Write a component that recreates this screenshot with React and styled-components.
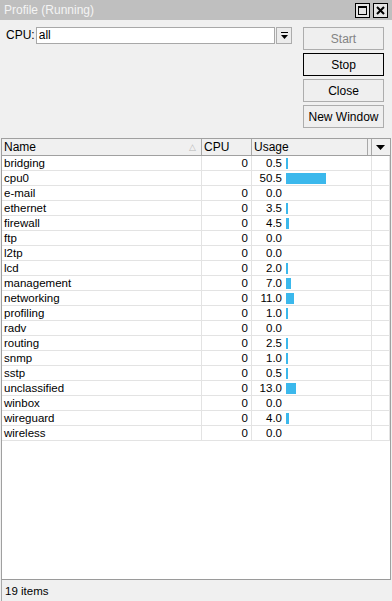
import React from "react";
import styled, { createGlobalStyle } from "styled-components";

const GlobalStyle = createGlobalStyle`
  html, body {
    margin: 0;
    padding: 0;
    background: #f0f0f0;
  }
  body {
    font-family: "Liberation Sans", Arial, sans-serif;
    font-size: 11px;
    color: #000;
  }
`;

const Window = styled.div`
  width: 392px;
  height: 601px;
  display: flex;
  flex-direction: column;
  background: #f0f0f0;
  overflow: hidden;
`;

const TitleBar = styled.div`
  height: 20px;
  flex: none;
  background: #bfbfbf;
  display: flex;
  align-items: center;
  justify-content: space-between;
  padding: 0 4px 0 4px;
  color: #f4f4f4;
  font-size: 12px;
`;

const TitleButtons = styled.div`
  display: flex;
  gap: 3px;
  padding-top: 1px;
`;

const TitleButton = styled.div`
  width: 13px;
  height: 13px;
  border: 1px solid #000;
  background: #e4e4e4;
  display: flex;
  align-items: center;
  justify-content: center;
`;

const TopPanel = styled.div`
  height: 118px;
  flex: none;
  display: flex;
  padding: 7px 0 0 6px;
  box-sizing: border-box;
`;

const FilterRow = styled.div`
  display: flex;
  align-items: flex-start;
  width: 286px;
`;

const Label = styled.span`
  width: 30px;
  line-height: 17px;
  font-size: 12px;
`;

const Input = styled.div`
  width: 237px;
  height: 15px;
  border: 1px solid #a8a8a8;
  background: #fff;
  padding-left: 2px;
  line-height: 15px;
  font-size: 12px;
`;

const DropButton = styled.div`
  width: 14px;
  height: 15px;
  margin-left: 1px;
  border: 1px solid #acacac;
  background: #ececec;
  display: flex;
  align-items: center;
  justify-content: center;
`;

const ButtonColumn = styled.div`
  display: flex;
  flex-direction: column;
  gap: 3px;
  margin-left: 11px;
`;

const Button = styled.div`
  width: 79px;
  height: 21px;
  border: 1px solid ${(p) => (p.$default ? "#000" : "#adadad")};
  background: #efefef;
  color: ${(p) => (p.$disabled ? "#838383" : "#000")};
  display: flex;
  align-items: center;
  justify-content: center;
  font-size: 12px;
`;

const Table = styled.div`
  flex: 1;
  margin: 0 1px;
  border: 1px solid #a0a0a0;
  border-bottom-color: #9a9a9a;
  background: #fff;
  display: flex;
  flex-direction: column;
  min-height: 0;
`;

const cols = "200px 50px 120px 1fr";

const HeaderRow = styled.div`
  display: grid;
  grid-template-columns: ${cols};
  height: 16px;
  background: #f0f0f0;
  border-bottom: 1px solid #a0a0a0;
`;

const HeaderCell = styled.div`
  position: relative;
  padding-left: ${(p) => (p.$pad !== undefined ? p.$pad : 2)}px;
  line-height: 16px;
  font-size: 12px;
  border-right: 1px solid ${(p) => (p.$last ? "transparent" : "#a8a8a8")};
  display: flex;
  align-items: center;
  justify-content: ${(p) => (p.$center ? "center" : "flex-start")};
  box-shadow: ${(p) => (p.$double ? "inset -3px 0 0 #f0f0f0, inset -4px 0 0 #a8a8a8" : "none")};
`;

const SortMark = styled.span`
  position: absolute;
  right: 5px;
  top: 0;
  color: #b8b8b8;
  font-size: 9px;
`;

const Row = styled.div`
  display: grid;
  grid-template-columns: ${cols};
  height: 15px;
  box-sizing: border-box;
  border-bottom: 1px solid #e3e3e3;
`;

const Cell = styled.div`
  border-right: 1px solid #e3e3e3;
  line-height: 14px;
  font-size: 11.5px;
  padding: 0 ${(p) => (p.$right ? 3 : 0)}px 0 ${(p) => (p.$right ? 0 : 2)}px;
  text-align: ${(p) => (p.$right ? "right" : "left")};
  white-space: nowrap;
  overflow: hidden;
`;

const UsageCell = styled.div`
  display: flex;
  align-items: center;
  border-right: 1px solid #e3e3e3;
`;

const UsageValue = styled.span`
  width: 30px;
  text-align: right;
  line-height: 14px;
  font-size: 11.5px;
`;

const Bar = styled.div`
  height: 11px;
  margin-left: 4px;
  background: #3bb8ec;
`;

const StatusBar = styled.div`
  height: 21px;
  flex: none;
  display: flex;
  align-items: center;
  padding-left: 3px;
  margin-left: 1px;
  border-left: 1px solid #a8a8a8;
  font-size: 11.5px;
`;

const rows = [
  ["bridging", "0", 0.5],
  ["cpu0", "", 50.5],
  ["e-mail", "0", 0],
  ["ethernet", "0", 3.5],
  ["firewall", "0", 4.5],
  ["ftp", "0", 0],
  ["l2tp", "0", 0],
  ["lcd", "0", 2],
  ["management", "0", 7],
  ["networking", "0", 11],
  ["profiling", "0", 1],
  ["radv", "0", 0],
  ["routing", "0", 2.5],
  ["snmp", "0", 1],
  ["sstp", "0", 0.5],
  ["unclassified", "0", 13],
  ["winbox", "0", 0],
  ["wireguard", "0", 4],
  ["wireless", "0", 0],
];

const barWidth = (v) => (v > 0 ? Math.max(2, Math.floor(v * 0.8)) : 0);

const App = () => {
  return (
    <Window>
      <GlobalStyle />
      <TitleBar>
        <span>Profile (Running)</span>
        <TitleButtons>
          <TitleButton>
            <svg width="9" height="9" viewBox="0 0 9 9">
              <rect x="0.5" y="0.5" width="8" height="8" fill="none" stroke="#000" />
              <rect x="0" y="0" width="9" height="2" fill="#000" />
            </svg>
          </TitleButton>
          <TitleButton>
            <svg width="9" height="9" viewBox="0 0 9 9">
              <path d="M1 1 L8 8 M8 1 L1 8" stroke="#000" strokeWidth="2" />
            </svg>
          </TitleButton>
        </TitleButtons>
      </TitleBar>
      <TopPanel>
        <FilterRow>
          <Label>CPU:</Label>
          <Input>all</Input>
          <DropButton>
            <svg width="7" height="8" viewBox="0 0 7 8">
              <rect x="0" y="0" width="7" height="1" fill="#000" />
              <path d="M0 3 L7 3 L3.5 7 Z" fill="#000" />
            </svg>
          </DropButton>
        </FilterRow>
        <ButtonColumn>
          <Button $disabled>Start</Button>
          <Button $default>Stop</Button>
          <Button>Close</Button>
          <Button>New Window</Button>
        </ButtonColumn>
      </TopPanel>
      <Table>
        <HeaderRow>
          <HeaderCell>
            Name
            <SortMark>△</SortMark>
          </HeaderCell>
          <HeaderCell>CPU</HeaderCell>
          <HeaderCell $double>Usage</HeaderCell>
          <HeaderCell $center $pad={0} $last>
            <svg width="9" height="5" viewBox="0 0 9 5">
              <path d="M0 0 L9 0 L4.5 5 Z" fill="#000" />
            </svg>
          </HeaderCell>
        </HeaderRow>
        {rows.map(([name, cpu, usage]) => (
          <Row key={name}>
            <Cell>{name}</Cell>
            <Cell $right>{cpu}</Cell>
            <UsageCell>
              <UsageValue>{usage.toFixed(1)}</UsageValue>
              {usage > 0 && <Bar style={{ width: barWidth(usage) }} />}
            </UsageCell>
            <Cell />
          </Row>
        ))}
      </Table>
      <StatusBar>19 items</StatusBar>
    </Window>
  );
};

export default App;
